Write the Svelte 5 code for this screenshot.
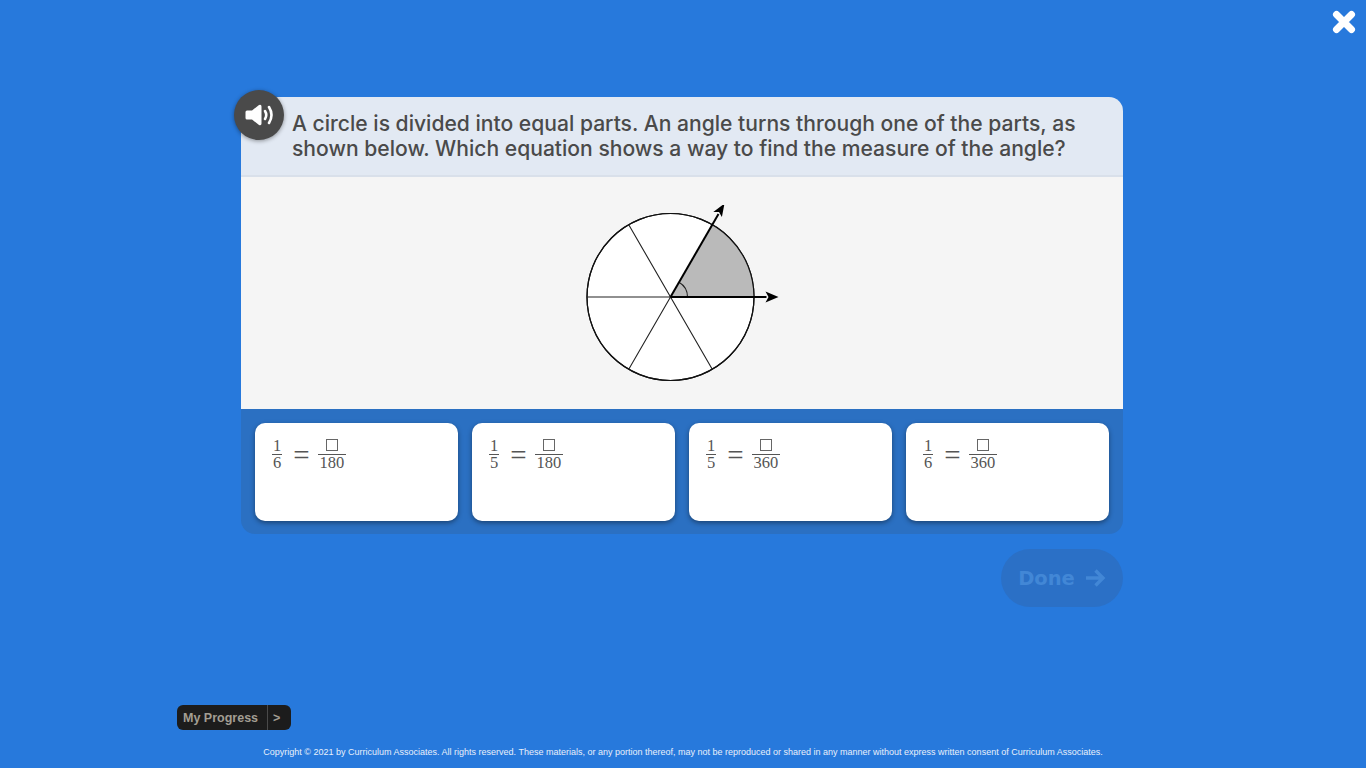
<script>
  const choices = [
    { top: 1, denom: 6, whole: 180 },
    { top: 1, denom: 5, whole: 180 },
    { top: 1, denom: 5, whole: 360 },
    { top: 1, denom: 6, whole: 360 }
  ];
</script>

<div class="page">
  <button class="close" aria-label="Close">
    <svg width="26" height="26" viewBox="0 0 26 26">
      <path d="M5.5 5.5 L20.5 20.5 M20.5 5.5 L5.5 20.5" stroke="#fff" stroke-width="7" stroke-linecap="round" />
    </svg>
  </button>

  <main class="activity">
    <div class="card">
      <button class="speaker" aria-label="Read aloud">
        <svg width="30" height="26" viewBox="0 0 30 26">
          <path d="M2 8.5 H7 L14 3 Q16.5 2 16.5 4.5 V21.5 Q16.5 24 14 23 L7 17.5 H2 Q0.5 17.5 0.5 16 V10 Q0.5 8.5 2 8.5 Z" fill="#fff" />
          <path d="M20 9 Q22.5 13 20 17" fill="none" stroke="#fff" stroke-width="2.6" stroke-linecap="round" />
          <path d="M24 5 Q29 13 24 21" fill="none" stroke="#fff" stroke-width="2.6" stroke-linecap="round" />
        </svg>
      </button>
      <div class="question">
        A circle is divided into equal parts. An angle turns through one of the parts, as<br />
        shown below. Which equation shows a way to find the measure of the angle?
      </div>
      <div class="figure">
        <svg width="200" height="184" viewBox="0 0 200 184">
          <g transform="translate(84.5 92)">
            <circle r="83.5" fill="#fff" stroke="#111" stroke-width="1.2" />
            <path d="M0 0 L83.5 0 A83.5 83.5 0 0 0 41.75 -72.3 Z" fill="#bababa" />
            <circle r="83.5" fill="none" stroke="#111" stroke-width="1.2" />
            <path d="M-83.5 0 H0 M-41.75 -72.3 L41.75 72.3 M-41.75 72.3 L0 0" stroke="#222" stroke-width="1.1" fill="none" />
            <path d="M17 0 A17 17 0 0 0 8.5 -14.7" stroke="#222" stroke-width="1.1" fill="none" />
            <path d="M0 0 H96" stroke="#000" stroke-width="2" />
            <path d="M108 0 L95 -5.5 L98 0 L95 5.5 Z" fill="#000" />
            <path d="M0 0 L48 -83" stroke="#000" stroke-width="2" />
            <path d="M54 -93.5 L42.8 -84.9 L48.5 -84.9 L51.4 -80 Z" fill="#000" />
          </g>
        </svg>
      </div>
      <div class="answers">
        {#each choices as c}
          <button class="answer">
            <span class="math">
              <span class="frac"><span>{c.top}</span><span class="den">{c.denom}</span></span>
              <span class="eq">=</span>
              <span class="frac"><span class="box"></span><span class="den">{c.whole}</span></span>
            </span>
          </button>
        {/each}
      </div>
    </div>

    <div class="actions">
      <button class="done">Done
        <svg width="22" height="20" viewBox="0 0 22 20">
          <path d="M2 10 H19 M11.5 2.5 L19 10 L11.5 17.5" fill="none" stroke="#4287d6" stroke-width="3.4" />
        </svg>
      </button>
    </div>
  </main>

  <footer>
    <div class="progress"><span class="label">My Progress</span><span class="chev">&gt;</span></div>
    <p class="copy">Copyright © 2021 by Curriculum Associates. All rights reserved. These materials, or any portion thereof, may not be reproduced or shared in any manner without express written consent of Curriculum Associates.</p>
  </footer>
</div>

<style>
  :global(body) {
    background: #2779dc;
    font-family: "Liberation Sans", Arial, sans-serif;
  }
  button {
    border: none;
    padding: 0;
    font: inherit;
  }
  .page {
    height: 768px;
    overflow: hidden;
    display: flex;
    flex-direction: column;
    position: relative;
  }
  .close {
    position: absolute;
    top: 9px;
    right: 9px;
    width: 26px;
    height: 26px;
    background: none;
  }
  .activity {
    width: 882px;
    margin: 97px 0 0 241px;
    flex: 1;
  }
  .card {
    position: relative;
    border-radius: 14px;
    overflow: visible;
  }
  .speaker {
    position: absolute;
    left: -7px;
    top: -7px;
    width: 50px;
    height: 50px;
    border-radius: 50%;
    background: #4a4a4a;
    box-shadow: 0 1px 4px rgba(0, 0, 0, 0.4);
    display: flex;
    align-items: center;
    justify-content: center;
    padding-left: 2px;
  }
  .question {
    background: #e2e9f3;
    border-bottom: 2px solid #d9e0ea;
    border-radius: 14px 14px 0 0;
    height: 80px;
    box-sizing: border-box;
    padding: 14px 20px 0 51px;
    color: #4a4a4a;
    font-family: Inter, sans-serif;
    font-weight: 500;
    font-size: 21.1px;
    line-height: 25px;
  }
  .figure {
    background: #f5f5f5;
    height: 232px;
    padding: 28px 0 0 345px;
    box-sizing: border-box;
  }
  .figure svg {
    display: block;
  }
  .answers {
    background: #2b70c2;
    border-radius: 0 0 14px 14px;
    padding: 14px;
    height: 125px;
    box-sizing: border-box;
    display: grid;
    grid-template-columns: repeat(4, 1fr);
    gap: 14px;
  }
  .answer {
    height: 98px;
    background: #fff;
    border-radius: 10px;
    box-shadow: 0 2px 5px rgba(0, 0, 0, 0.4);
    padding: 14px 15px;
    display: flex;
    align-items: flex-start;
    justify-content: flex-start;
  }
  .math {
    display: flex;
    align-items: center;
    gap: 7px;
    color: #555;
    font-family: "Liberation Serif", serif;
    font-size: 16.5px;
    line-height: 16px;
  }
  .frac {
    display: inline-flex;
    flex-direction: column;
    align-items: center;
    padding: 0 2px;
    min-width: 7px;
  }
  .den {
    border-top: 1px solid #555;
    align-self: stretch;
    text-align: center;
    padding: 0 1px;
  }
  .frac:last-child .den {
    padding: 0 2px;
  }
  .eq {
    font-size: 29px;
    line-height: 16px;
    margin: 1px -1px 0 2px;
  }
  .box {
    width: 10px;
    height: 10px;
    border: 1px solid #666;
    margin: 2px 0 3px;
  }
  .actions {
    display: flex;
    justify-content: flex-end;
    margin-top: 15px;
  }
  .done {
    width: 122px;
    height: 58px;
    border-radius: 29px;
    background: #2b70c6;
    color: #4287d6;
    font-family: "DejaVu Sans", sans-serif;
    font-weight: 700;
    font-size: 19.5px;
    display: flex;
    align-items: center;
    justify-content: center;
    gap: 9px;
  }
  footer {
    height: 63px;
    box-sizing: border-box;
    position: relative;
  }
  .progress {
    display: flex;
    width: 114px;
    height: 25px;
    margin-left: 177px;
    background: #1c1c1c;
    border-radius: 6px;
    box-sizing: border-box;
    align-items: stretch;
    font-size: 12.5px;
    font-weight: 700;
    line-height: 26px;
    color: #a39e93;
  }
  .label {
    padding-left: 6px;
    width: 91px;
    box-sizing: border-box;
    border-right: 1px solid #4a4a4a;
  }
  .chev {
    padding-left: 5px;
  }
  .copy {
    margin: 16px 0 0;
    text-align: center;
    color: #e8f0fb;
    font-size: 9px;
    line-height: 12px;
  }
</style>
